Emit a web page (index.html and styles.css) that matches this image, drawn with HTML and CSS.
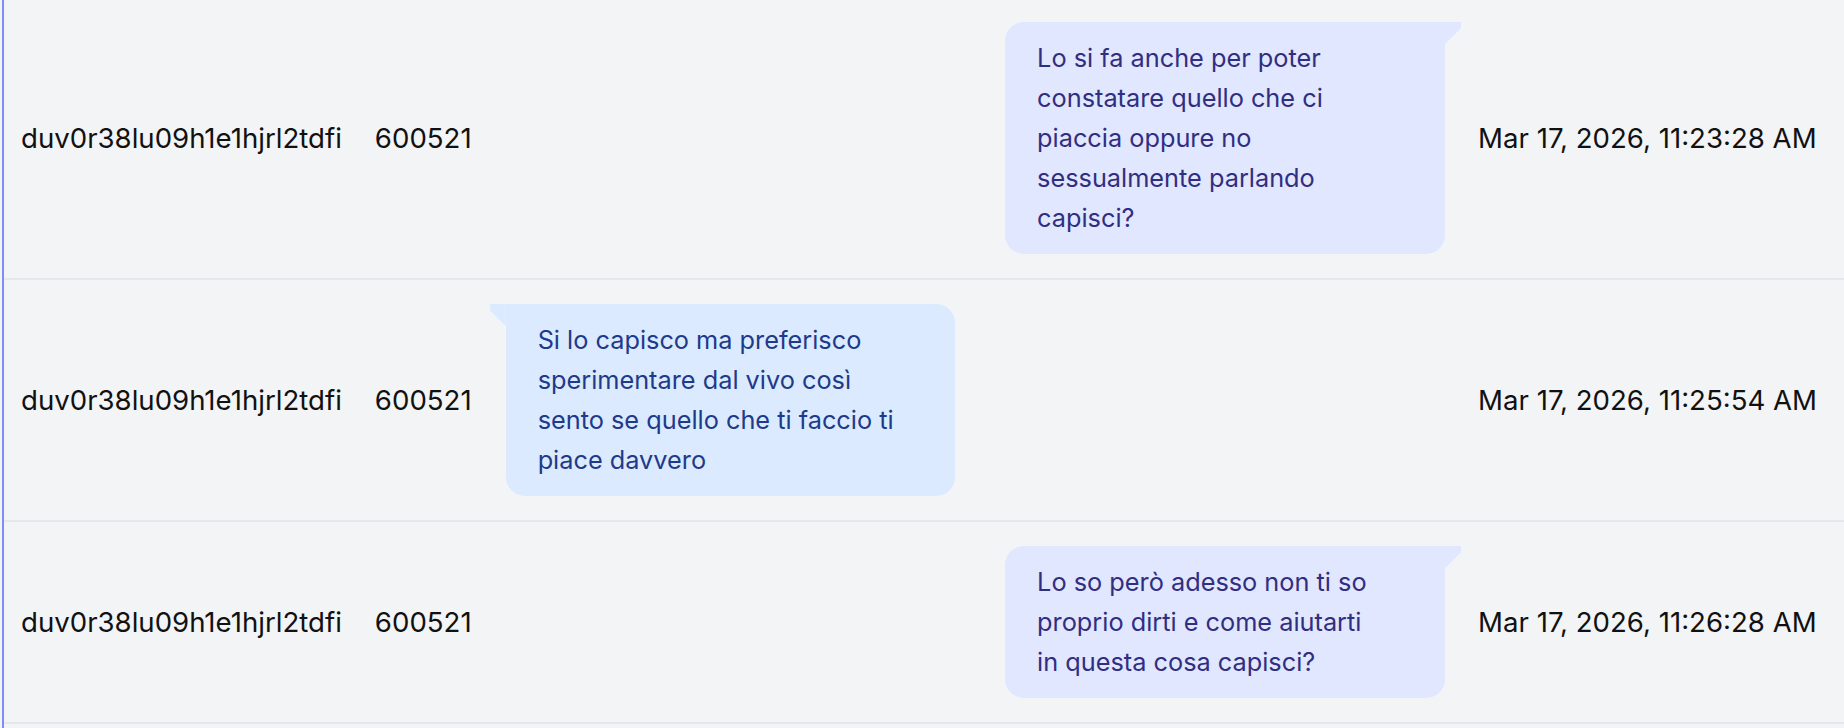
FILE: index.html
```html
<!DOCTYPE html>
<html lang="it">
<head>
<meta charset="utf-8">
<title>Messaggi</title>
<link rel="stylesheet" href="styles.css">
</head>
<body>
<div class="frame">
  <table class="log">
    <tbody>
      <tr class="row">
        <td class="c-id">duv0r38lu09h1e1hjrl2tdfi</td>
        <td class="c-num">600521</td>
        <td class="c-msg">
          <div class="bubble sent">Lo si fa anche per poter constatare quello che ci piaccia oppure no sessualmente parlando capisci?</div>
        </td>
        <td class="c-date">Mar 17, 2026, 11:23:28 AM</td>
      </tr>
      <tr class="row">
        <td class="c-id">duv0r38lu09h1e1hjrl2tdfi</td>
        <td class="c-num">600521</td>
        <td class="c-msg">
          <div class="bubble recv">Si lo capisco ma preferisco sperimentare dal vivo così sento se quello che ti faccio ti piace davvero</div>
        </td>
        <td class="c-date">Mar 17, 2026, 11:25:54 AM</td>
      </tr>
      <tr class="row">
        <td class="c-id">duv0r38lu09h1e1hjrl2tdfi</td>
        <td class="c-num">600521</td>
        <td class="c-msg">
          <div class="bubble sent">Lo so però adesso non ti so proprio dirti e come aiutarti in&nbsp;questa cosa capisci?</div>
        </td>
        <td class="c-date">Mar 17, 2026, 11:26:28 AM</td>
      </tr>
      <tr class="row">
        <td class="c-id">&nbsp;</td>
        <td class="c-num"></td>
        <td class="c-msg"></td>
        <td class="c-date"></td>
      </tr>
    </tbody>
  </table>
</div>
</body>
</html>
```
FILE: styles.css
```css
html, body {
  margin: 0;
  padding: 0;
  background: #f3f4f6;
  overflow: hidden;
}
body {
  font-family: Inter, "Noto Sans", sans-serif;
  font-size: 27.6px;
  color: #111111;
  height: 728px;
}
.frame {
  margin-left: 2px;
  border-left: 2px solid #818cf8;
  height: 740px;
  margin-top: -2px;
}
.log {
  width: 100%;
  border-collapse: collapse;
}
.row td {
  border-bottom: 2px solid #e5e7eb;
  vertical-align: middle;
  padding-top: 24px;
  padding-bottom: 24px;
  line-height: 40px;
}
.c-id {
  width: 1px;
  white-space: nowrap;
  padding-left: 17px;
  padding-right: 33px;
}
.c-num {
  width: 1px;
  white-space: nowrap;
  padding-left: 0;
  padding-right: 18px;
}
.c-msg {
  padding-left: 0;
  padding-right: 17px;
}
.c-date {
  width: 1px;
  white-space: nowrap;
  padding-left: 0;
  padding-right: 27px;
}
.bubble {
  position: relative;
  box-sizing: border-box;
  padding: 16px 40px 16px 32px;
  line-height: 40px;
  font-size: 25.3px;
}
.bubble.sent {
  width: 440px;
  margin-left: auto;
  margin-right: 16px;
  background: #e0e7ff;
  color: #312e81;
  border-radius: 19px 0 19px 19px;
}
.bubble.recv {
  width: 449px;
  margin-left: 16px;
  background: #dbeafe;
  color: #1e3a8a;
  border-radius: 0 19px 19px 19px;
}
.bubble.sent::after {
  content: "";
  position: absolute;
  top: 0;
  right: -16px;
  width: 16px;
  height: 22px;
  background: #e0e7ff;
  clip-path: polygon(0 0, 100% 0, 100% 6px, 0 22px);
}
.bubble.recv::after {
  content: "";
  position: absolute;
  top: 0;
  left: -16px;
  width: 16px;
  height: 22px;
  background: #dbeafe;
  clip-path: polygon(0 0, 100% 0, 100% 22px, 0 6px);
}
```
